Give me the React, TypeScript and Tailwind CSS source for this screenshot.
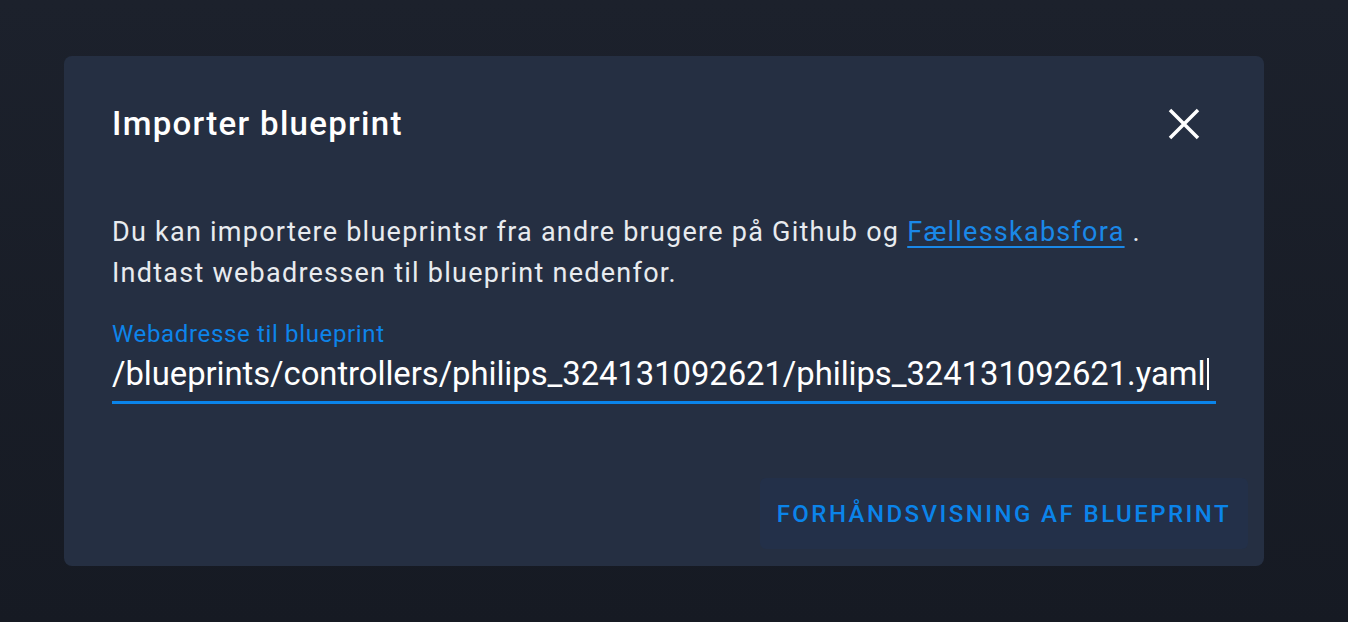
import React from "react";

export default function App() {
  return (
    <div
      className="w-[1348px] h-[622px] bg-gradient-to-b from-[#1c212c] to-[#161a23] pt-[56px] pl-[64px]"
      style={{ fontFamily: "Roboto, 'Noto Sans', sans-serif" }}
    >
      <div className="w-[1200px] h-[510px] rounded-[8px] bg-[#252f42] flex flex-col pt-[48px]">
        <div className="flex items-center justify-between pl-[48px] pr-[56px] h-[40px]">
          <h2 className="text-[33px] leading-[40px] font-medium text-white tracking-[1.3px]">
            Importer blueprint
          </h2>
          <button className="w-[48px] h-[48px] flex items-center justify-center">
            <svg width="48" height="48" viewBox="0 0 24 24" fill="none">
              <path d="M5 5L19 19M19 5L5 19" stroke="white" strokeWidth="1.75" strokeLinecap="butt" />
            </svg>
          </button>
        </div>
        <div className="pl-[48px] pr-[48px] pt-[68px]">
          <p className="text-[27px] leading-[41px] text-[#e8ebef] tracking-[1.25px]">
            Du kan importere blueprintsr fra andre brugere på Github og{" "}
            <a className="text-[#1a88e8] underline underline-offset-[5px] decoration-[2px]">Fællesskabsfora</a> .
            <br />
            Indtast webadressen til blueprint nedenfor.
          </p>
          <div className="mt-[26px] w-[1104px]">
            <div className="text-[24px] leading-[28px] text-[#0d84ea] tracking-[0.65px]">Webadresse til blueprint</div>
            <div className="mt-[6px] flex items-center h-[40px] text-[32.8px] leading-[40px] text-white whitespace-nowrap tracking-[-0.05px]">
              <span>/blueprints/controllers/philips_324131092621/philips_324131092621.yaml</span>
              <span className="inline-block w-[2px] h-[32px] bg-white ml-[2px] shrink-0" />
            </div>
            <div className="mt-[7px] h-[3px] bg-[#0a84ea]" />
          </div>
        </div>
        <div className="flex justify-end pr-[16px] mt-auto mb-[17px]">
          <button className="h-[71px] px-[17px] rounded-[6px] bg-[#233049] text-[#0b84ea] text-[24px] font-medium tracking-[2.45px]">
            FORHÅNDSVISNING AF BLUEPRINT
          </button>
        </div>
      </div>
    </div>
  );
}
